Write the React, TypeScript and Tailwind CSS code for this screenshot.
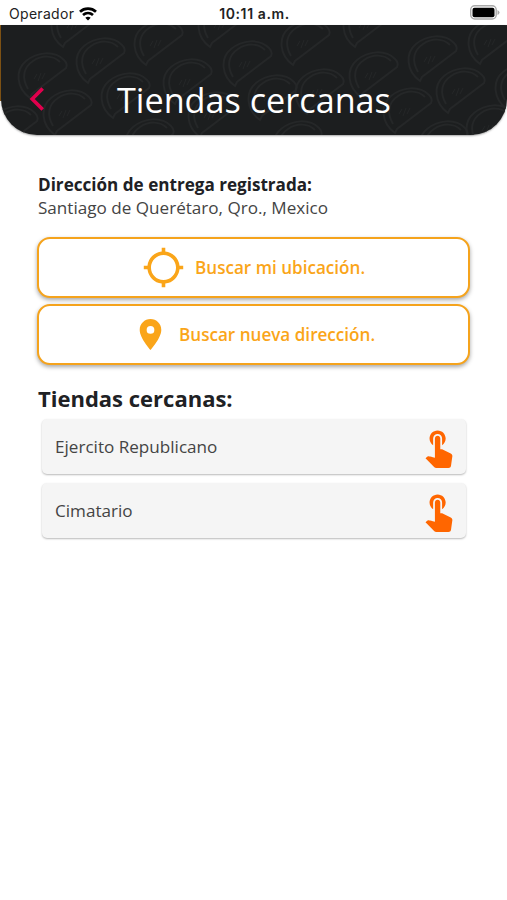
import { MdGpsNotFixed, MdPlace, MdTouchApp } from "react-icons/md";

const tacos: [number, number][] = [
  [17, 27], [75, 12], [42, 64], [100, 47], [133, -6], [50, -24], [-12, 80], [124, 93],
  [162, 33], [222, 15], [187, 66], [247, 49], [280, -6], [197, -24], [272, 95],
  [294, 43], [348, 26], [407, 10], [382, 62], [435, 42], [467, -7], [342, -24], [465, 79], [418, 95], [494, 38],
];

function Header() {
  return (
    <header className="relative h-[110px] shrink-0 bg-white">
      <div className="absolute left-0 top-0 h-[76px] w-3 bg-[#8a5a17]" />
      <div className="relative ml-px h-full overflow-hidden rounded-b-[36px] bg-[#1c1e1f] shadow-[0_1px_2px_rgba(0,0,0,0.35)]">
        <svg className="absolute inset-0" width="507" height="110" fill="none" stroke="#252728" strokeWidth="2">
          {tacos.map(([x, y]) => (
            <g key={`${x},${y}`} transform={`translate(${x} ${y})`}>
              <path d="M12 46C-2 36-3 18 8 9S36-2 46 8q4 4 2 8L14 42q-2 4-2 4Z" />
              <path d="M10 37C3 25 6 15 15 9s20-6 27 1" />
              <path d="M16 27l3-5m1 7l3-8m1 6l3-6" strokeWidth="1" />
            </g>
          ))}
        </svg>
        <div className="relative flex h-full items-start pt-[51px]">
          <svg className="ml-[27px] mt-[10px]" width="18" height="26" viewBox="0 0 18 26" fill="none" stroke="#e0004d" strokeWidth="3.6">
            <path d="M14.7 2.500L4.200 13l10.500 10.500" />
          </svg>
          <h1 className="ml-[71px] whitespace-nowrap text-[34.200px] leading-[48px] text-white">Tiendas cercanas</h1>
        </div>
      </div>
    </header>
  );
}

function Store({ name }: { name: string }) {
  return (
    <li className="flex h-[55px] items-center justify-between rounded-[5px] bg-[#f5f5f5] pl-[13px] pr-[6px] shadow-[0_1px_2px_rgba(0,0,0,0.28)]">
      <span className="pt-px text-[17.100px] text-[#444]">{name}</span>
      <MdTouchApp size={43} color="#ff6600" />
    </li>
  );
}

const button =
  "flex h-[61px] w-full items-center whitespace-nowrap rounded-[13px] border-[2.500px] border-[#f5a31c] bg-white text-[17.100px] font-semibold text-[#faa519] shadow-[0_2px_4px_rgba(0,0,0,0.35)]";

export default function App() {
  return (
    <div className="flex h-[900px] w-[507px] flex-col overflow-hidden bg-white font-['Open_Sans',sans-serif]">
      <div className="grid h-[25px] shrink-0 grid-cols-3 items-center pl-[9px] pr-[7px] font-['Inter',sans-serif] text-[13px] text-[#222]">
        <div className="flex items-center gap-[5px] pt-[2px]">
          <span className="text-[14px] tracking-[0.300px]">Operador</span>
          <svg width="18" height="14" viewBox="0 0 18 14" fill="none" stroke="#000" strokeWidth="2.8">
            <path d="M1 4.7c4.5-4 11.500-4 16 0M4 8c3-2.500 7-2.500 10 0" />
            <path d="M9 13.500L6.300 10.800q2.700-2 5.400 0Z" fill="#000" stroke="none" />
          </svg>
        </div>
        <span className="pt-px text-center text-[14px] font-semibold tracking-[0.600px]">10:11 a.m.</span>
        <svg className="justify-self-end" width="31" height="15" viewBox="0 0 31 15">
          <rect x="1.700" y=".7" width="25.500" height="13.300" rx="4" fill="#fff" stroke="#aaa" strokeWidth="1.400" />
          <rect x="3.500" y="2.700" width="22" height="9.500" rx="2" fill="#000" />
          <path d="M28.500 5v5q2-1 2-2.500t-2-2.500" fill="#aaa" />
        </svg>
      </div>
      <Header />
      <main className="px-[37px] pt-[37px] text-[#202124]">
        <p className="pl-px pt-px text-[17.100px] font-bold leading-[23px]">Dirección de entrega registrada:</p>
        <p className="pl-px text-[17.100px] leading-[23px] text-[#444]">Santiago de Querétaro, Qro., Mexico</p>
        <div className="mt-[18px] flex flex-col gap-[6px]">
          <button className={button}>
            <MdGpsNotFixed className="ml-[103px] mr-[10px]" size={43} />
            <span className="pt-px">Buscar mi ubicación.</span>
          </button>
          <button className={button}>
            <MdPlace className="ml-[93px] mr-[10px]" size={37} />
            <span className="pt-px">Buscar nueva dirección.</span>
          </button>
        </div>
        <h2 className="mt-[17px] pl-px text-[22px] font-bold leading-[32px]">Tiendas cercanas:</h2>
        <ul className="ml-[5px] mr-[4px] mt-[5px] flex flex-col gap-[9px]">
          <Store name="Ejercito Republicano" />
          <Store name="Cimatario" />
        </ul>
      </main>
    </div>
  );
}
